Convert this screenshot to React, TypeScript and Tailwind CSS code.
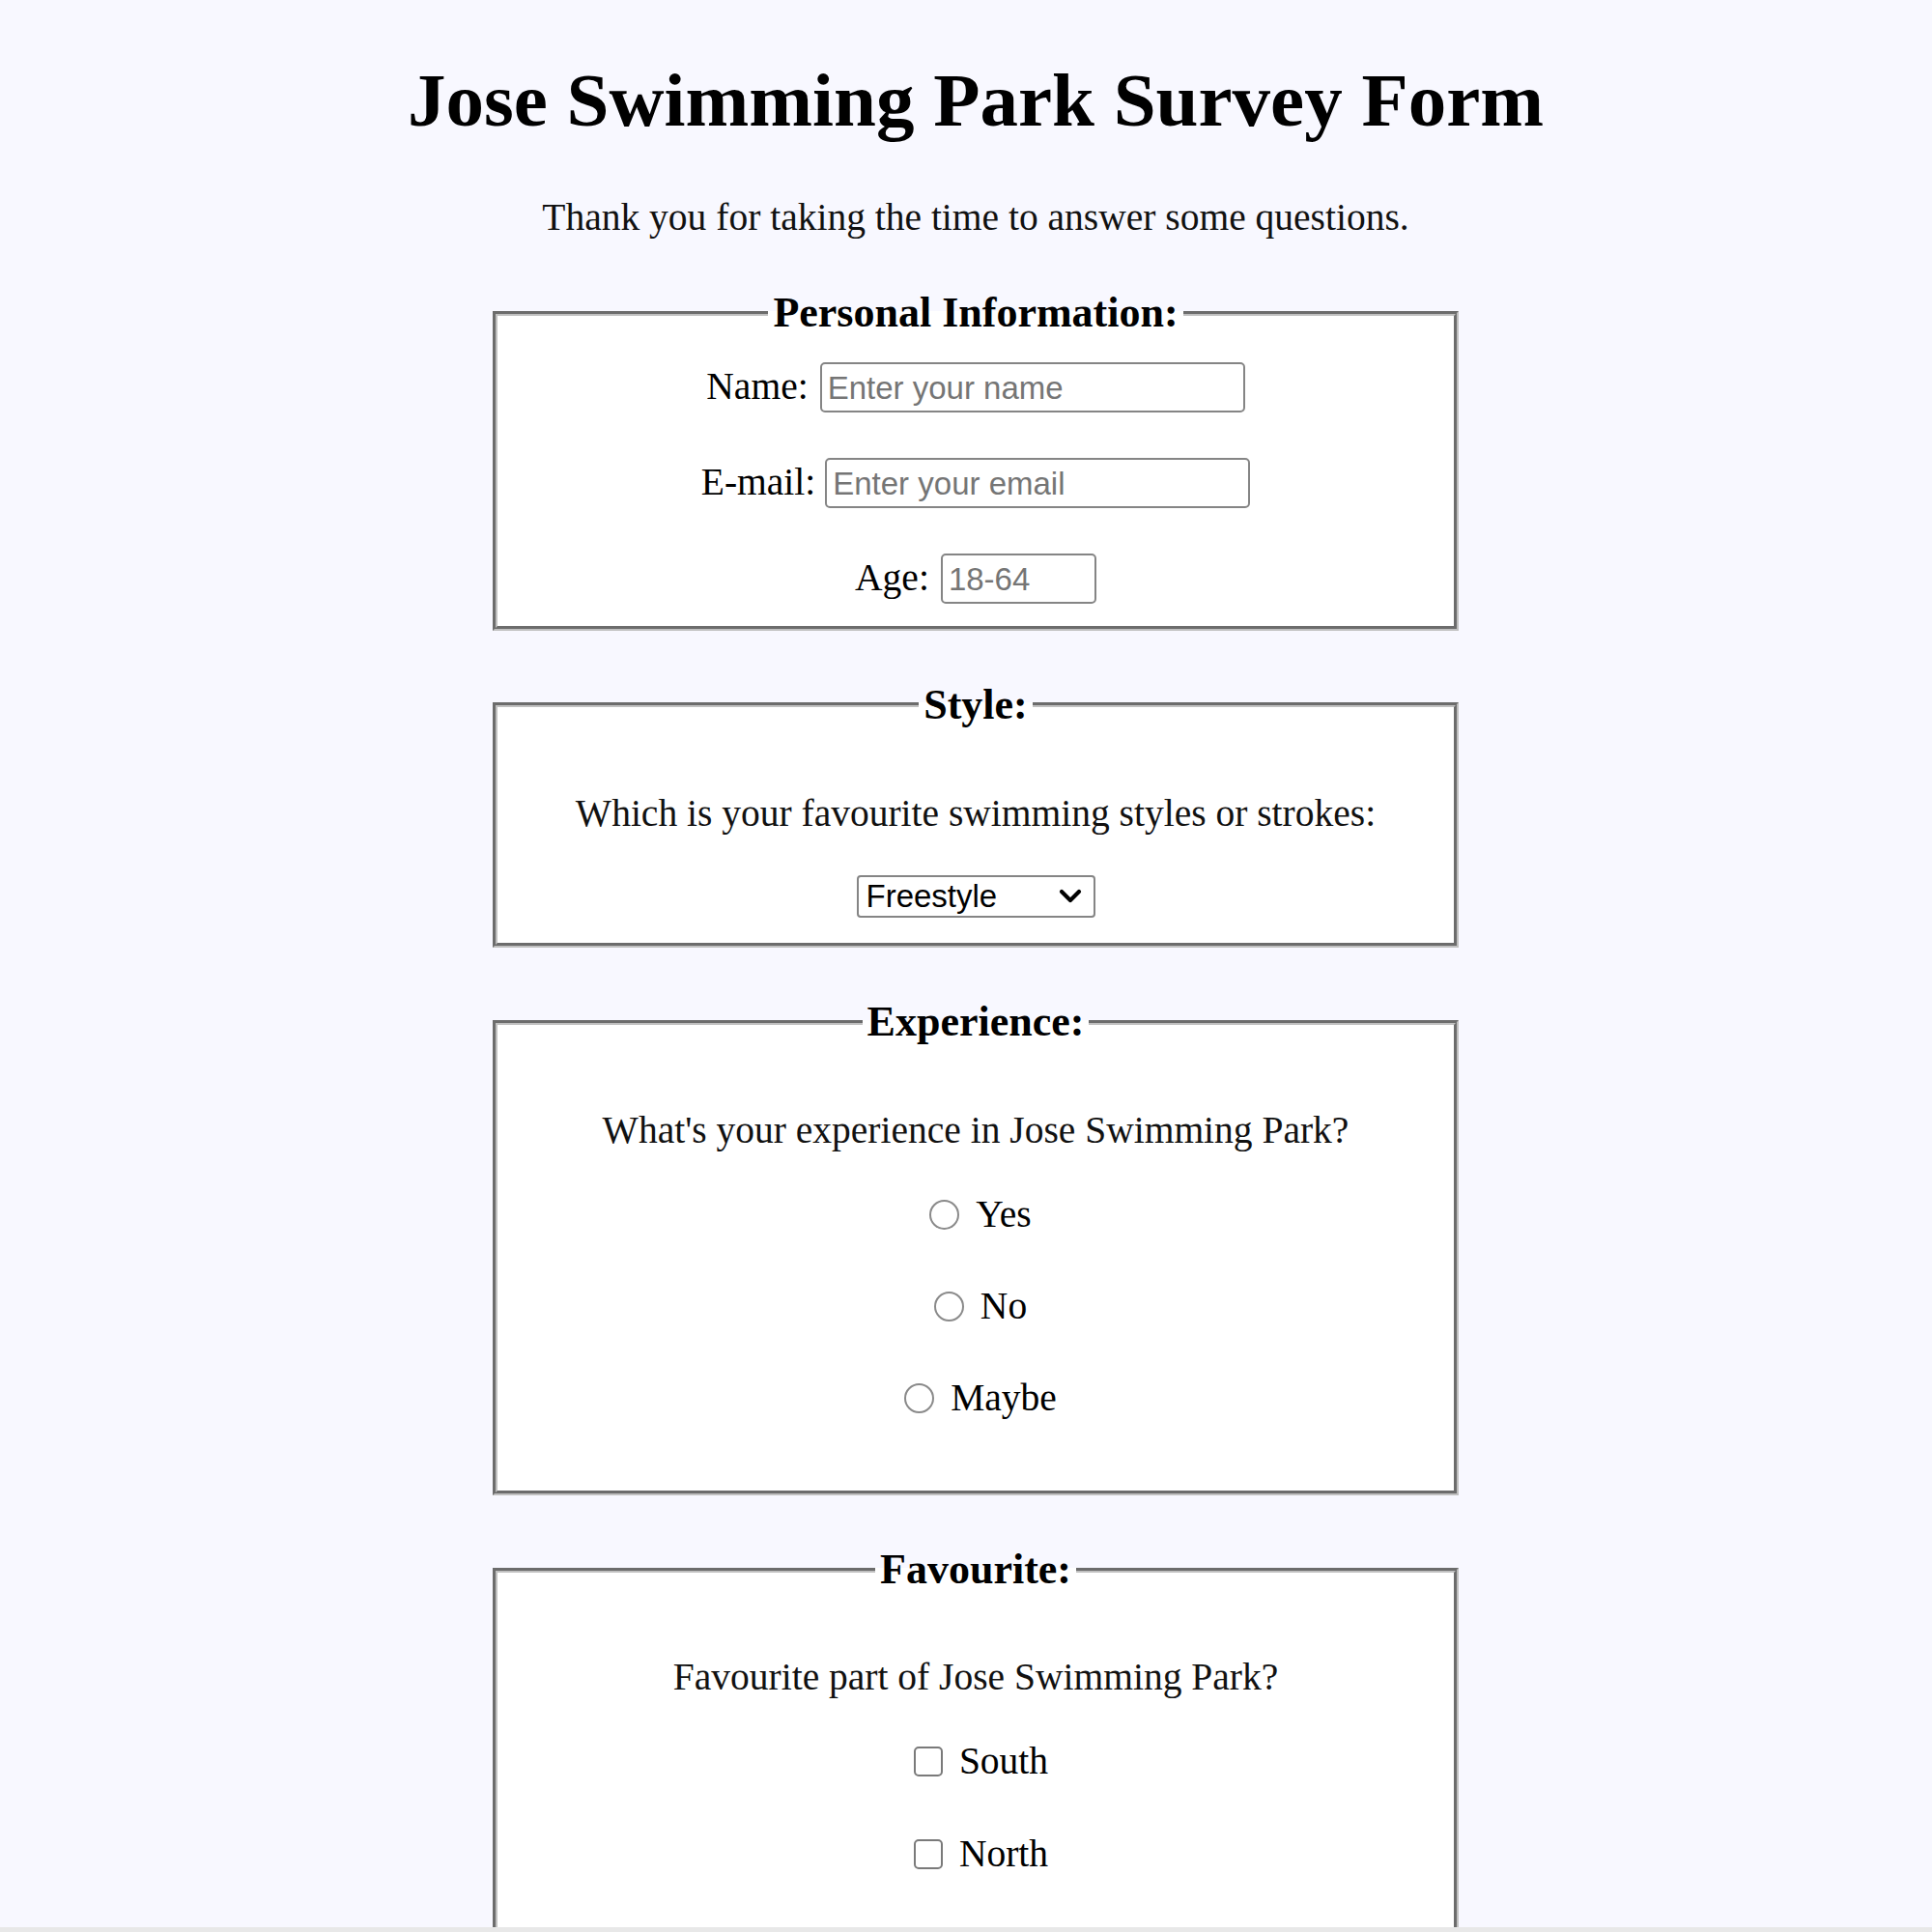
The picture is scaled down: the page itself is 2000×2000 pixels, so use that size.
import React from "react";

const serif = { fontFamily: '"Liberation Serif", "Times New Roman", serif' };

function Legend({ children }: { children: React.ReactNode }) {
  return (
    <legend className="mx-auto px-[5px] text-[44px] font-bold leading-[50px] text-black">
      {children}
    </legend>
  );
}

function Radio({ id, label }: { id: string; label: string }) {
  return (
    <div className="flex h-[45px] items-center justify-center">
      <input
        id={id}
        type="radio"
        name="experience"
        className="ml-[10px] mr-[17px] h-[31px] w-[31px] appearance-none rounded-full border-[2px] border-[#8a8a8a] bg-white"
      />
      <label htmlFor={id} className="text-[39.5px] leading-[45px]">
        {label}
      </label>
    </div>
  );
}

function Check({ id, label }: { id: string; label: string }) {
  return (
    <div className="flex h-[45px] items-center justify-center">
      <input
        id={id}
        type="checkbox"
        className="ml-[11px] mr-[17px] h-[31px] w-[30px] appearance-none rounded-[5px] border-[2px] border-[#7a7a7a] bg-white"
      />
      <label htmlFor={id} className="text-[39.5px] leading-[45px]">
        {label}
      </label>
    </div>
  );
}

const inputCls =
  "h-[52px] rounded-[5px] border-[2px] border-[#858585] bg-white px-[6px] pt-[3px] text-[33px] text-black placeholder:text-[#757575] outline-none";
const sans = { fontFamily: '"Liberation Sans", Arial, sans-serif' };

export default function App() {
  return (
    <div className="min-h-screen bg-[#f8f8ff] pl-[20px] text-black" style={serif}>
      <div className="flex flex-col items-center">
        <h1 className="mt-[58px] text-center text-[79px] font-bold leading-[91px]">
          Jose Swimming Park Survey Form
        </h1>
        <p className="mt-[54px] text-center text-[39.5px] leading-[45px] text-[#111]">
          Thank you for taking the time to answer some questions.
        </p>

        <form className="mt-[51px] flex w-[1000px] flex-col gap-[52px]">
          {/* Personal Information */}
          <fieldset className="border-[5px] border-[#c0c0c0] bg-white px-0 pb-[23px] pt-0 [border-style:groove]">
            <Legend>Personal Information:</Legend>
            <div className="mt-[25.5px] flex flex-col gap-[47px]">
              <div className="flex items-baseline justify-center gap-[12px]">
                <label htmlFor="name" className="text-[39.5px] leading-[45px]">
                  Name:
                </label>
                <input id="name" type="text" placeholder="Enter your name" className={`${inputCls} w-[440px]`} style={sans} />
              </div>
              <div className="flex items-baseline justify-center gap-[10px]">
                <label htmlFor="email" className="text-[39.5px] leading-[45px]">
                  E-mail:
                </label>
                <input id="email" type="email" placeholder="Enter your email" className={`${inputCls} w-[440px]`} style={sans} />
              </div>
              <div className="flex items-baseline justify-center gap-[12px]">
                <label htmlFor="age" className="text-[39.5px] leading-[45px]">
                  Age:
                </label>
                <input id="age" type="text" placeholder="18-64" className={`${inputCls} w-[161px]`} style={sans} />
              </div>
            </div>
          </fieldset>

          {/* Style */}
          <fieldset className="border-[5px] border-[#c0c0c0] bg-white px-0 pb-[26px] pt-0 [border-style:groove]">
            <Legend>Style:</Legend>
            <p className="mt-[65.5px] text-center text-[39.5px] leading-[45px] text-[#111]">
              Which is your favourite swimming styles or strokes:
            </p>
            <div className="mt-[41px] flex justify-center">
              <div className="relative h-[44px] w-[247px]">
                <select
                  className="h-[44px] w-[247px] appearance-none rounded-[4px] border-[2px] border-[#858585] bg-white pl-[8px] text-[33px] leading-[40px] text-black outline-none"
                  style={sans}
                  defaultValue="freestyle"
                >
                  <option value="freestyle">Freestyle</option>
                  <option value="backstroke">Backstroke</option>
                  <option value="breaststroke">Breaststroke</option>
                  <option value="butterfly">Butterfly</option>
                </select>
                <svg
                  className="pointer-events-none absolute right-[13px] top-[14px]"
                  width="26"
                  height="16"
                  viewBox="0 0 26 16"
                  fill="none"
                >
                  <polyline points="4,3 13,12 22,3" stroke="#000" strokeWidth="4.2" strokeLinecap="round" strokeLinejoin="round" />
                </svg>
              </div>
            </div>
          </fieldset>

          {/* Experience */}
          <fieldset className="border-[5px] border-[#c0c0c0] bg-white px-0 pb-[73.5px] pt-0 [border-style:groove]">
            <Legend>Experience:</Legend>
            <p className="mt-[65px] text-center text-[39.5px] leading-[45px] text-[#111]">
              What's your experience in Jose Swimming Park?
            </p>
            <div className="mt-[41.5px] flex flex-col gap-[50px]">
              <Radio id="yes" label="Yes" />
              <Radio id="no" label="No" />
              <Radio id="maybe" label="Maybe" />
            </div>
          </fieldset>

          {/* Favourite */}
          <fieldset className="mb-[60px] border-[5px] border-[#c0c0c0] bg-white px-0 pb-[120px] pt-0 [border-style:groove]">
            <Legend>Favourite:</Legend>
            <p className="mt-[64px] text-center text-[39.5px] leading-[45px] text-[#111]">
              Favourite part of Jose Swimming Park?
            </p>
            <div className="mt-[41.5px] flex flex-col gap-[51px]">
              <Check id="south" label="South" />
              <Check id="north" label="North" />
            </div>
          </fieldset>
        </form>
      </div>
      <div className="fixed bottom-0 left-0 h-[5px] w-full bg-[#e8e8e8]" />
    </div>
  );
}
